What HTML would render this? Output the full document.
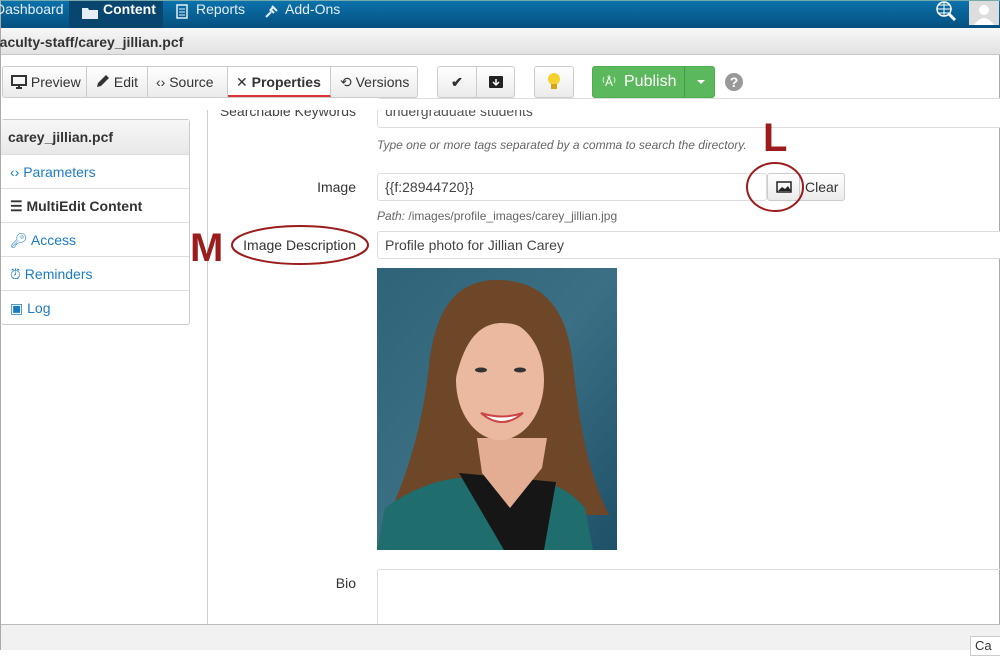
<!DOCTYPE html>
<html><head><meta charset="utf-8"><style>
*{box-sizing:border-box;margin:0;padding:0}
body{width:1000px;height:650px;overflow:hidden;font-family:"Liberation Sans",sans-serif;font-size:14px;color:#333;background:#fff;position:relative;border-left:1px solid #aaa;border-right:1px solid #aaa}
.a{position:absolute}
.nav{left:0;top:0;width:1000px;height:28px;background:linear-gradient(#0b72ab,#05507f);border-top:1px solid #7aa}
.nav span{position:absolute;top:0px;color:#e6eef5;font-size:14px}
.crumb{left:0;top:28px;width:1000px;height:27px;background:linear-gradient(#f7f7f7,#e2e2e2);border-bottom:1px solid #c8c8c8;font-weight:bold;font-size:14px;padding:6px 0 0 0;color:#333}
.btn{position:absolute;top:66px;height:32px;border:1px solid #ccc;background:linear-gradient(#fff,#ebebeb);border-radius:3px}
.bg{position:absolute;top:0;height:30px;font-size:14px;line-height:30px;color:#333;border-right:1px solid #ccc}
.side{left:0;top:119px;width:189px;border:1px solid #ccc;border-radius:3px;border-left:none}
.side div{height:34px;border-top:1px solid #ddd;padding:9px 0 0 9px;color:#1d7bc4;font-size:14px}
.lbl{position:absolute;font-size:14px;color:#333;text-align:right;right:643px}
.inp{position:absolute;left:376px;border:1px solid #ddd;border-radius:3px;height:28px;padding:5px 7px;font-size:14px;color:#444;background:#fff}
.help{position:absolute;left:376px;font-size:12px;font-style:italic;color:#666}
</style></head><body>
<div class="a nav">
 <div class="a" style="left:68px;top:0;width:94px;height:27px;background:#08466f"></div>
 <span style="left:-6px">Dashboard</span>
 <svg class="a" style="left:81px;top:4px" width="16" height="14"><path d="M0 3h6l1 2h9v9H0z" fill="#e6eef5"/></svg>
 <span style="left:102px;font-weight:bold;color:#fff">Content</span>
 <svg class="a" style="left:175px;top:2px" width="12" height="16"><rect x="1" y="2" width="10" height="13" fill="none" stroke="#e6eef5" stroke-width="1.5"/><path d="M3 6h6M3 9h6M3 12h6" stroke="#e6eef5"/></svg>
 <span style="left:195px">Reports</span>
 <svg class="a" style="left:263px;top:2px" width="16" height="16"><path d="M2 14l5-5M6 6l4 4M8 3l5 5M9 4l-3 4" stroke="#e6eef5" stroke-width="2"/></svg>
 <span style="left:284px">Add-Ons</span>
 <svg class="a" style="left:934px;top:0" width="24" height="22"><circle cx="9" cy="8" r="7" fill="none" stroke="#fff" stroke-width="1.5"/><path d="M2 8h14M9 1v14M4 4h10M4 12h10" stroke="#fff"/><path d="M14 13l6 6" stroke="#fff" stroke-width="3"/></svg>
 <div class="a" style="left:968px;top:0;width:30px;height:24px;background:#ddd"><svg width="30" height="24"><circle cx="15" cy="9" r="5" fill="#fff"/><path d="M5 24q10-14 20 0z" fill="#fff"/></svg></div>
</div>
<div class="a crumb"><span style="margin-left:-6px">faculty-staff/carey_jillian.pcf</span></div>

<div class="lbl" style="top:103px;color:#444">Searchable Keywords</div>
<div class="inp" style="top:98px;height:30px;width:630px;color:#555;padding-top:4px">undergraduate students</div>
<div class="a" style="left:207px;top:99px;width:793px;height:11px;background:#fff"></div>

<div class="btn" style="left:1px;width:416px">
 <div class="bg" style="left:0;width:84px;padding-left:8px"><svg width="16" height="14" style="vertical-align:-2px"><rect x="1" y="1" width="14" height="9" fill="none" stroke="#333" stroke-width="2"/><path d="M5 13h6M8 10v3" stroke="#333" stroke-width="2"/></svg> Preview</div>
 <div class="bg" style="left:84px;width:61px;padding-left:9px"><svg width="14" height="14" style="vertical-align:-1px"><path d="M1 13l1-4 8-8 3 3-8 8z" fill="#333"/></svg> Edit</div>
 <div class="bg" style="left:145px;width:80px;padding-left:8px">‹› Source</div>
 <div class="bg" style="left:225px;width:103px;padding-left:8px;background:#fff;font-weight:bold;border-bottom:2px solid #d33"><span style="font-weight:normal">✕</span> Properties</div>
 <div class="bg" style="left:328px;width:87px;padding-left:9px;border:none">⟲ Versions</div>
</div>
<div class="btn" style="left:436px;width:78px">
 <div class="bg" style="left:0;width:39px;text-align:center;font-weight:bold">✔</div>
 <div class="bg" style="left:39px;width:38px;border:none"><svg width="38" height="30"><rect x="12" y="9" width="14" height="12" rx="1" fill="#222"/><path d="M19 12v5M16 15l3 3 3-3" stroke="#fff" stroke-width="1.5" fill="none"/></svg></div>
</div>
<div class="btn" style="left:533px;width:40px"><svg width="38" height="30"><circle cx="19" cy="12" r="6" fill="#f5d130"/><rect x="16" y="17" width="6" height="5" fill="#d4a516"/></svg></div>
<div class="a" style="left:591px;top:66px;width:123px;height:32px;background:#5cb85c;border:1px solid #4cae4c;border-radius:3px;color:#fff;font-size:16px;line-height:30px">
 <span style="position:absolute;left:9px;font-size:12px">⁽Å⁾</span><span style="position:absolute;left:31px">Publish</span>
 <div class="a" style="left:91px;top:0;width:1px;height:30px;background:#449d44"></div>
 <div class="a" style="left:104px;top:13px;border:4px solid transparent;border-top:4px solid #fff"></div>
</div>
<div class="a" style="left:724px;top:73px;width:18px;height:18px;border-radius:50%;background:#999;color:#fff;font-weight:bold;font-size:14px;text-align:center;line-height:18px">?</div>

<div class="a side" style="background:#fff">
 <div style="border-top:none;height:34px;background:linear-gradient(#f7f7f7,#e8e8e8);color:#333;font-weight:bold;padding-top:9px;padding-left:7px">carey_jillian.pcf</div>
 <div>‹› Parameters</div>
 <div style="color:#333;font-weight:bold">☰ MultiEdit Content</div>
 <div>🔑︎ Access</div>
 <div>⏰︎ Reminders</div>
 <div>▣ Log</div>
</div>
<div class="a" style="left:206px;top:110px;width:1px;height:515px;background:#ccc"></div>

<div class="help" style="top:138px">Type one or more tags separated by a comma to search the directory.</div>
<div class="a" style="left:762px;top:118px;color:#9b1c1c;font-size:40px;font-weight:bold;line-height:40px">L</div>
<div class="lbl" style="top:179px">Image</div>
<div class="inp" style="top:173px;width:390px">{{f:28944720}}</div>
<div class="a" style="left:766px;top:173px;width:78px;height:28px;border:1px solid #ccc;border-radius:3px;background:linear-gradient(#fff,#ebebeb)">
 <div class="a" style="left:0;top:0;width:32px;height:26px;border-right:1px solid #ccc"><svg width="32" height="26"><rect x="9" y="8" width="14" height="10" fill="none" stroke="#222" stroke-width="1.5"/><path d="M10 17l4-4 3 2 3-3 3 5z" fill="#222"/></svg></div>
 <span class="a" style="left:37px;top:5px;font-size:14px">Clear</span>
</div>
<svg class="a" style="left:744px;top:162px" width="62" height="52"><ellipse cx="30" cy="25" rx="28" ry="24" fill="none" stroke="#9b1c1c" stroke-width="2"/></svg>
<div class="help" style="top:209px;font-size:12px">Path: <span style="font-style:normal">/images/profile_images/carey_jillian.jpg</span></div>
<div class="lbl" style="top:237px">Image Description</div>
<div class="inp" style="top:231px;width:630px">Profile photo for Jillian Carey</div>
<svg class="a" style="left:229px;top:224px" width="141" height="44"><ellipse cx="70" cy="21" rx="68" ry="19" fill="none" stroke="#9b1c1c" stroke-width="2"/></svg>
<div class="a" style="left:189px;top:228px;color:#9b1c1c;font-size:40px;font-weight:bold;line-height:40px">M</div>

<svg class="a" style="left:376px;top:268px" width="240" height="282">
 <defs><linearGradient id="b" x1="0" y1="0" x2="1" y2="1"><stop offset="0" stop-color="#2f6478"/><stop offset=".5" stop-color="#3b6f84"/><stop offset="1" stop-color="#1e5168"/></linearGradient></defs>
 <rect width="240" height="282" fill="url(#b)"/>
 <path d="M120 12c-45 0-62 35-68 85-6 60-22 110-40 150h220c-20-40-30-90-36-150-5-50-25-85-76-85z" fill="#6e4628"/>
 <path d="M8 240c25-18 50-28 75-30h60c30 2 50 12 65 30l8 42H0z" fill="#1f6d6d"/>
 <path d="M82 205l45 77h40l12-68z" fill="#161616"/>
 <path d="M100 170l5 35 28 35 32-40 5-30z" fill="#e2ad93"/>
 <ellipse cx="123" cy="112" rx="44" ry="60" fill="#eab9a0"/>
 <path d="M79 110c0-50 18-68 46-70 32 0 46 25 46 68-10-40-22-53-46-53-24 0-38 20-46 55z" fill="#6e4628"/>
 <path d="M104 145q21 18 42 0q-21 7-42 0z" fill="#fff" stroke="#c44" stroke-width="2"/>
 <ellipse cx="104" cy="102" rx="6" ry="2.5" fill="#333"/><ellipse cx="143" cy="102" rx="6" ry="2.5" fill="#333"/>
</svg>

<div class="lbl" style="top:575px">Bio</div>
<div class="a" style="left:376px;top:569px;width:630px;height:60px;border:1px solid #ddd;border-radius:3px"></div>
<div class="a" style="left:0;top:624px;width:1000px;height:26px;background:#f1f1f1;border-top:1px solid #bbb"></div>
<div class="a" style="left:969px;top:636px;width:40px;height:20px;border:1px solid #ccc;background:#fff;font-size:13px;padding:1px 0 0 4px">Ca</div>
</body></html>
